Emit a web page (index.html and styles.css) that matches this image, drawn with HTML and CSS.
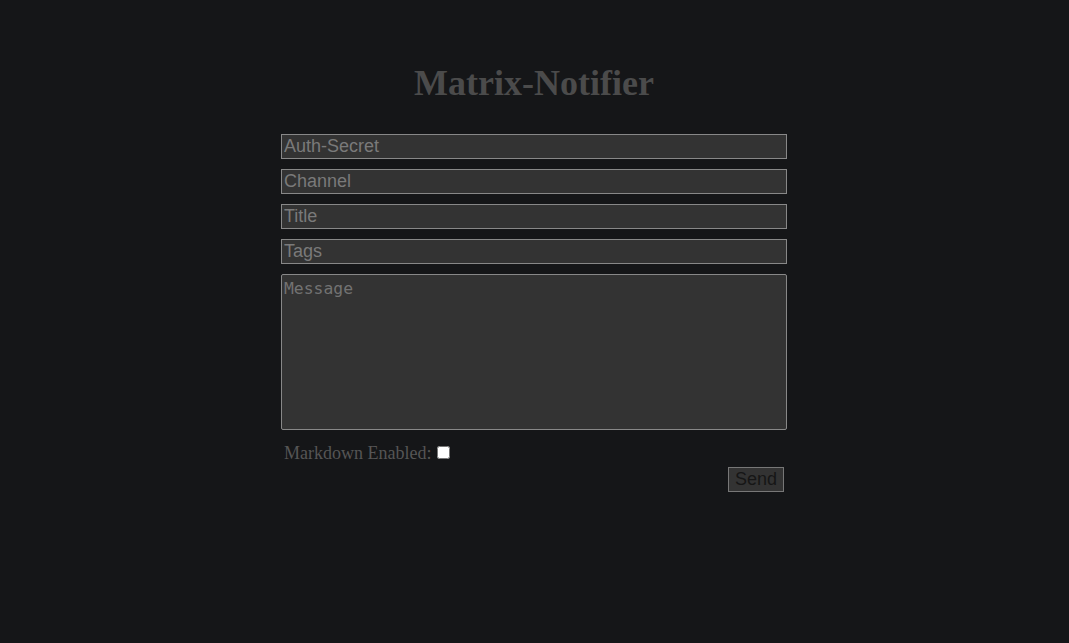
FILE: index.html
```html
<!DOCTYPE html>
<html>
<head>
<meta charset="utf-8">
<link rel="stylesheet" href="styles.css">
</head>
<body>
<main class="page">
<h1 class="title">Matrix-Notifier</h1>
<form class="form">
  <input class="field" type="text" placeholder="Auth-Secret">
  <input class="field" type="text" placeholder="Channel">
  <input class="field" type="text" placeholder="Title">
  <input class="field" type="text" placeholder="Tags">
  <textarea class="message" placeholder="Message"></textarea>
  <label class="md">Markdown Enabled: <input class="check" type="checkbox"></label>
  <div class="actions"><button class="send" type="button">Send</button></div>
</form>
</main>
</body>
</html>
```
FILE: styles.css
```css
html, body {
  margin: 0;
  padding: 0;
  background: #151618;
  height: 100%;
  overflow: hidden;
}
body {
  font-family: "Liberation Serif", serif;
}
.page {
  padding: 60px 1px 0 0;
}
.title {
  margin: 0 0 28px 0;
  text-align: center;
  font-size: 36px;
  line-height: 46px;
  font-weight: bold;
  color: #4b4b4b;
}
.form {
  width: 506px;
  margin: 0 auto;
  display: flex;
  flex-direction: column;
  gap: 10px;
}
.field {
  box-sizing: border-box;
  height: 25px;
  width: 100%;
  margin: 0;
  padding: 0 2px;
  background: #333333;
  border: 1px solid #888888;
  border-radius: 0;
  color: #888;
  font-family: "Liberation Sans", Arial, sans-serif;
  font-size: 18px;
  outline: none;
}
.field::placeholder {
  color: #7a7a7a;
}
.message {
  box-sizing: border-box;
  height: 156px;
  width: 100%;
  margin: 0;
  padding: 4px 2px 2px;
  background: #333333;
  border: 1px solid #888888;
  border-radius: 2px;
  color: #888;
  font-family: "DejaVu Sans Mono", monospace;
  font-size: 16.4px;
  resize: none;
  outline: none;
}
.message::placeholder {
  color: #727272;
}
.md {
  display: flex;
  align-items: center;
  gap: 6px;
  padding-left: 3px;
  margin-top: 3px;
  font-size: 18px;
  line-height: 20px;
  color: #555555;
}
.check {
  margin: 0 0 2px 0;
  width: 13px;
  height: 13px;
}
.actions {
  display: flex;
  justify-content: flex-end;
  padding-right: 3px;
  margin-top: -6px;
}
.send {
  box-sizing: border-box;
  width: 56px;
  height: 25px;
  padding: 0;
  background: #333333;
  border: 1px solid #777777;
  border-radius: 0;
  color: #161616;
  font-family: "Liberation Sans", Arial, sans-serif;
  font-size: 18px;
}
```
